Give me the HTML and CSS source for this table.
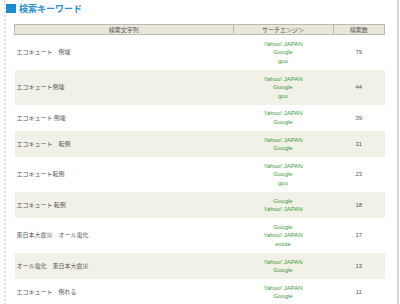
FILE: index.html
```html
<!DOCTYPE html>
<html lang="ja">
<head>
<meta charset="utf-8">
<link rel="stylesheet" href="styles.css">
</head>
<body>
<div class="frame">
  <h2 class="title"><span class="mark"></span>検索キーワード</h2>
  <table class="kw">
    <thead>
      <tr><th class="c1">検索文字列</th><th class="c2">サーチエンジン</th><th class="c3">検索数</th></tr>
    </thead>
    <tbody>
      <tr><td class="word">エコキュート　倒壊</td><td class="eng">Yahoo! JAPAN<br>Google<br>goo</td><td class="num">79</td></tr>
      <tr class="alt"><td class="word">エコキュート倒壊</td><td class="eng">Yahoo! JAPAN<br>Google<br>goo</td><td class="num">44</td></tr>
      <tr><td class="word">エコキュート 倒壊</td><td class="eng">Yahoo! JAPAN<br>Google</td><td class="num">39</td></tr>
      <tr class="alt"><td class="word">エコキュート　転倒</td><td class="eng">Yahoo! JAPAN<br>Google</td><td class="num">31</td></tr>
      <tr><td class="word">エコキュート転倒</td><td class="eng">Yahoo! JAPAN<br>Google<br>goo</td><td class="num">23</td></tr>
      <tr class="alt"><td class="word">エコキュート 転倒</td><td class="eng">Google<br>Yahoo! JAPAN</td><td class="num">18</td></tr>
      <tr><td class="word">東日本大震災　オール電化</td><td class="eng">Google<br>Yahoo! JAPAN<br>excite</td><td class="num">17</td></tr>
      <tr class="alt"><td class="word">オール電化　東日本大震災</td><td class="eng">Yahoo! JAPAN<br>Google</td><td class="num">13</td></tr>
      <tr><td class="word">エコキュート　倒れる</td><td class="eng">Yahoo! JAPAN<br>Google</td><td class="num">11</td></tr>
    </tbody>
  </table>
</div>
</body>
</html>
```

FILE: styles.css
```css
html, body {
  margin: 0;
  padding: 0;
  background: #fff;
}
body {
  font-family: "Noto Sans CJK JP", "Liberation Sans", sans-serif;
  height: 304px;
  overflow: hidden;
}
.frame {
  margin-left: 4px;
  width: 391px;
  min-height: 304px;
  border-left: 2px dotted #e0e0e0;
  border-right: 2px solid #d6d6d6;
  padding-top: 4px;
}
.title {
  margin: 0;
  display: flex;
  align-items: center;
  gap: 3px;
  font-size: 9px;
  line-height: 9px;
  height: 9px;
  color: #2790cf;
  font-weight: bold;
}
.mark {
  display: block;
  width: 10px;
  height: 9px;
  background: #1a8bd0;
}
.kw {
  margin: 11px 0 0 8px;
  width: 371px;
  border-collapse: collapse;
  font-size: 6px;
  line-height: 8.5px;
  color: #555;
}
.kw th {
  background: #e9e6da;
  border: 1px solid #bdbab0;
  font-weight: normal;
  height: 9px;
  padding: 0;
  line-height: 9px;
  color: #555;
}
.c1 { width: 220px; }
.c2 { width: 100px; }
.c3 { width: 51px; }
.kw td {
  padding: 4.75px 0 4.5px;
  vertical-align: middle;
}
.kw .alt td {
  background: #f2f1e8;
}
.word {
  padding-left: 2px !important;
  text-align: left;
}
.eng {
  text-align: center;
  color: #3b9b3b;
  font-family: "Liberation Sans", "Noto Sans CJK JP", sans-serif;
}
.num {
  text-align: center;
  font-family: "Liberation Sans", sans-serif;
}
```
